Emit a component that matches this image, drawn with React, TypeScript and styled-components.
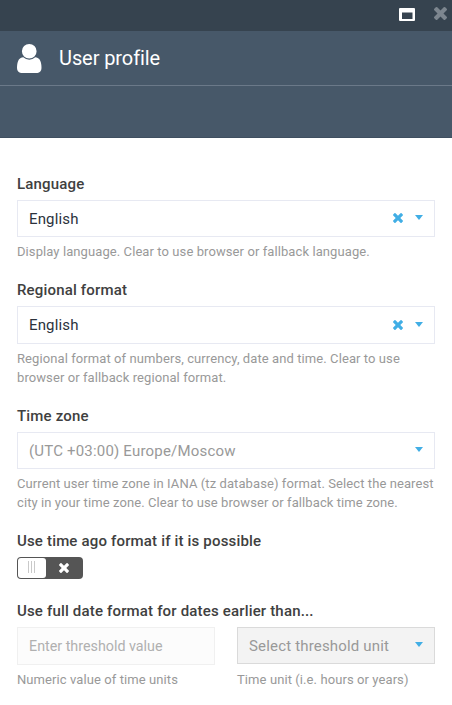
import React from "react";
import styled, { createGlobalStyle } from "styled-components";

const GlobalStyle = createGlobalStyle`
  *, *::before, *::after { box-sizing: border-box; }
  body { margin: 0; background: #fff; font-family: Roboto, "Liberation Sans", sans-serif; }
`;

const Page = styled.div`
  min-height: 705px;
  background: #fff;
  overflow: hidden;
`;

const WindowBar = styled.div`
  display: flex;
  justify-content: flex-end;
  gap: 19px;
  height: 31px;
  padding: 7px 5px 0 0;
  background: #36434f;
`;

const WindowButton = styled.button<{ $top?: number }>`
  display: block;
  height: 13px;
  margin: ${(p) => p.$top ?? 0}px 0 0;
  padding: 0;
  border: 0;
  background: none;
  color: #fff;
  svg { display: block; }
`;

const Header = styled.header`
  display: flex;
  align-items: center;
  gap: 17.5px;
  height: 55px;
  padding: 0 17px;
  border-bottom: 1px solid #6b7989;
  background: #475869;
  color: #fff;
`;

const Title = styled.h1`
  margin: 0;
  font-size: 20px;
  font-weight: 400;
  line-height: 24px;
  letter-spacing: -0.09px;
`;

const Toolbar = styled.div`
  height: 52px;
  background: #475869;
  border-bottom: 1px solid #3f4f60;
`;

const Form = styled.main`
  display: flex;
  flex-direction: column;
  gap: 19px;
  padding: 36px 17px 0;
`;

const Field = styled.section<{ $extra?: number }>`
  margin-bottom: ${(p) => p.$extra ?? 0}px;
`;

const Label = styled.div`
  margin-bottom: 6px;
  color: #404040;
  font-size: 15px;
  font-weight: 500;
  line-height: 20px;
  letter-spacing: 0.17px;
  white-space: nowrap;
`;

const tones = {
  filled: { border: "#e7e9f2", bg: "#fff", text: "#2b323c", size: 15, spacing: 0.15 },
  empty: { border: "#e7e9f2", bg: "#fff", text: "#999", size: 15, spacing: 0.19 },
  input: { border: "#f0f0f0", bg: "#fcfcfc", text: "#b0b0b0", size: 14.3, spacing: 0 },
  disabled: { border: "#dadada", bg: "#f3f3f3", text: "#999", size: 15, spacing: 0.17 },
};

const Box = styled.div<{ $tone: keyof typeof tones; $height?: number }>`
  display: flex;
  align-items: center;
  height: ${(p) => p.$height ?? 37}px;
  padding: 0 11px;
  border: 1px solid ${(p) => tones[p.$tone].border};
  background: ${(p) => tones[p.$tone].bg};
  color: ${(p) => tones[p.$tone].text};
  font-size: ${(p) => tones[p.$tone].size}px;
  letter-spacing: ${(p) => tones[p.$tone].spacing}px;
  line-height: 20px;
  white-space: nowrap;
`;

const Value = styled.span`
  flex: 1;
`;

const Clear = styled.span`
  display: flex;
  margin: 0 12px 1px 0;
  color: #41aee5;
`;

const Arrow = styled.span`
  width: 0;
  height: 0;
  margin-bottom: 2px;
  border: 4px solid transparent;
  border-top: 5px solid #41aee5;
  border-bottom: 0;
`;

const Help = styled.p<{ $gap?: number }>`
  margin: ${(p) => p.$gap ?? 5}px 0 0;
  color: #999;
  font-size: 13px;
  line-height: 19px;
  letter-spacing: 0.088px;
  white-space: nowrap;
`;

const Switch = styled.button`
  display: flex;
  width: 66px;
  height: 22px;
  padding: 1px;
  border: 0;
  border-radius: 4px;
  background: #555;
  color: #fff;
`;

const Knob = styled.span`
  display: flex;
  align-items: flex-start;
  justify-content: center;
  gap: 2px;
  width: 28px;
  height: 20px;
  padding-top: 3px;
  border-radius: 3px;
  background: #fff;
`;

const Grip = styled.i`
  width: 1px;
  height: 12px;
  background: #c9c9c9;
  &:first-child { margin-left: -2px; }
`;

const Off = styled.span`
  display: flex;
  flex: 1;
  align-items: center;
  justify-content: center;
  height: 20px;
  padding: 0 1px 1px 0;
`;

const Columns = styled.div`
  display: grid;
  grid-template-columns: 198px 198px;
  gap: 22px;
`;

const Cross = ({ size }: { size: number }) => (
  <svg width={size} height={size} viewBox="302 366 1188 1188" fill="currentColor">
    <path d="M1490 1322q0 40-28 68l-136 136q-28 28-68 28t-68-28l-294-294-294 294q-28 28-68 28t-68-28l-136-136q-28-28-28-68t28-68l294-294-294-294q-28-28-28-68t28-68l136-136q28-28 68-28t68 28l294 294 294-294q28-28 68-28t68 28l136 136q28 28 28 68t-28 68l-294 294 294 294q28 28 28 68z" />
  </svg>
);

const UserIcon = () => (
  <svg width="24.5" height="29" viewBox="256 128 1280 1536" preserveAspectRatio="none" fill="currentColor">
    <path d="M1536 1399q0 109-62.5 187t-150.5 78h-854q-88 0-150.5-78t-62.5-187q0-85 8.5-160.5t31.5-152 58.5-131 94-89 134.5-34.5q131 128 313 128t313-128q76 0 134.5 34.5t94 89 58.5 131 31.5 152 8.5 160.5zm-256-887q0 159-112.5 271.5t-271.5 112.5-271.5-112.5-112.5-271.5 112.5-271.5 271.5-112.5 271.5 112.5 112.5 271.5z" />
  </svg>
);

const WindowIcon = () => (
  <svg width="16" height="13" viewBox="0 0 16 13">
    <path
      fill="currentColor"
      fillRule="evenodd"
      d="M1 0h14Q16 0 16 1v11q0 1-1 1h-14Q0 13 0 12v-11Q0 0 1 0zM3 4.5V11h10.5V4.5z"
    />
  </svg>
);

const CloseColor = styled.span`
  display: block;
  color: #7d868f;
`;

type SelectProps = {
  value: string;
  tone: keyof typeof tones;
  height?: number;
  clearable?: boolean;
};

const Select = ({ value, tone, height, clearable }: SelectProps) => (
  <Box $tone={tone} $height={height}>
    <Value>{value}</Value>
    {clearable && (
      <Clear>
        <Cross size={10} />
      </Clear>
    )}
    <Arrow />
  </Box>
);

export default function App() {
  return (
    <Page>
      <GlobalStyle />
      <WindowBar>
        <WindowButton $top={1} aria-label="Maximize">
          <WindowIcon />
        </WindowButton>
        <WindowButton aria-label="Close">
          <CloseColor>
            <Cross size={13} />
          </CloseColor>
        </WindowButton>
      </WindowBar>
      <Header>
        <UserIcon />
        <Title>User profile</Title>
      </Header>
      <Toolbar />
      <Form>
        <Field>
          <Label>Language</Label>
          <Select value="English" tone="filled" clearable />
          <Help>Display language. Clear to use browser or fallback language.</Help>
        </Field>
        <Field>
          <Label>Regional format</Label>
          <Select value="English" tone="filled" height={38} clearable />
          <Help>
            Regional format of numbers, currency, date and time. Clear to use
            <br />
            browser or fallback regional format.
          </Help>
        </Field>
        <Field>
          <Label>Time zone</Label>
          <Select value="(UTC +03:00) Europe/Moscow" tone="empty" />
          <Help>
            Current user time zone in IANA (tz database) format. Select the nearest
            <br />
            city in your time zone. Clear to use browser or fallback time zone.
          </Help>
        </Field>
        <Field $extra={3}>
          <Label>Use time ago format if it is possible</Label>
          <Switch role="switch" aria-checked={false}>
            <Knob>
              <Grip />
              <Grip />
              <Grip />
            </Knob>
            <Off>
              <Cross size={10} />
            </Off>
          </Switch>
        </Field>
        <Field>
          <Label>Use full date format for dates earlier than...</Label>
          <Columns>
            <div>
              <Box $tone="input" $height={38}>
                <Value>Enter threshold value</Value>
              </Box>
              <Help>Numeric value of time units</Help>
            </div>
            <div>
              <Select value="Select threshold unit" tone="disabled" />
              <Help $gap={6}>Time unit (i.e. hours or years)</Help>
            </div>
          </Columns>
        </Field>
      </Form>
    </Page>
  );
}
